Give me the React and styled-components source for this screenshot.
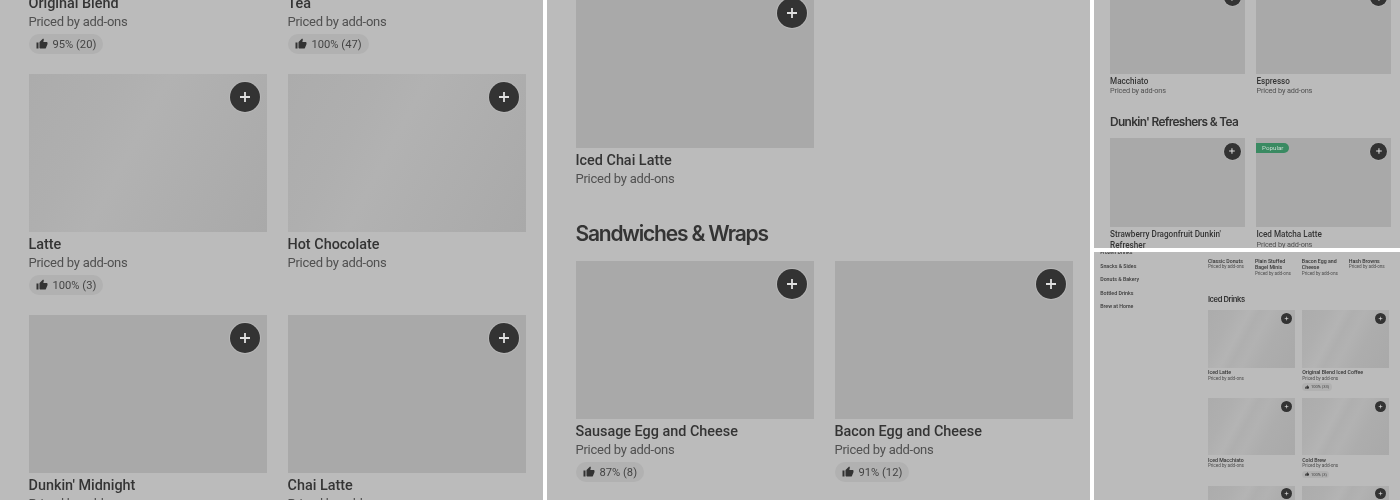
import React from "react";
import styled, { createGlobalStyle } from "styled-components";
import { MdThumbUp } from "react-icons/md";

const Global = createGlobalStyle`
  html, body { margin: 0; padding: 0; background: #fff; }
  body { font-family: Roboto, "Liberation Sans", sans-serif; }
`;

const Board = styled.div`
  width: 1400px;
  height: 500px;
  display: grid;
  grid-template-columns: 543px 543px 306px;
  grid-template-rows: 248px 248px;
  column-gap: 4px;
  row-gap: 4px;
  overflow: hidden;
  background: #fff;
`;

const Panel = styled.section`
  background: #bbbbbb;
  overflow: hidden;
  grid-row: ${(p) => p.$row || "auto"};
`;

const Sheet = styled.div`
  zoom: ${(p) => p.$zoom || 1};
  margin-top: ${(p) => p.$top || 0}px;
  padding-left: 28.5px;
  filter: blur(${(p) => p.$blur || 0.25}px);
`;

const MenuSheet = styled.div`
  zoom: 0.364;
  display: grid;
  grid-template-columns: 313px 1fr;
  filter: blur(1px);
`;

const Sidebar = styled.nav`
  display: flex;
  flex-direction: column;
  margin-top: -16px;
  padding-left: 17px;
`;

const SideItem = styled.div`
  font-size: 14.5px;
  line-height: 37px;
  font-weight: 500;
  color: #3a3a3a;
`;

const Main = styled.div`
  padding-top: 16px;
`;

const Carousel = styled.div`
  display: grid;
  grid-template-columns: repeat(4, 115px);
  column-gap: 14px;
  height: 54px;
`;

const Grid = styled.div`
  display: grid;
  grid-template-columns: 238.5px 238.5px;
  column-gap: 20.5px;
  row-gap: 20px;
`;

const Card = styled.article`
  display: flex;
  flex-direction: column;
  align-items: flex-start;
  min-width: 0;
`;

const shines = {
  soft: "linear-gradient(118deg, #acacac 0%, #afafaf 28%, #b2b2b2 44%, #afafaf 62%, #a9a9a9 100%)",
  bright: "linear-gradient(118deg, #acacac 0%, #afafaf 22%, #b4b4b4 36%, #afafaf 44%, #b2b2b2 54%, #adadad 68%, #a9a9a9 100%)",
};

const Photo = styled.div`
  position: relative;
  align-self: stretch;
  height: 158px;
  margin-bottom: 3.5px;
  background: ${(p) => shines[p.$shine] || "#a9a9a9"};
`;

const AddButton = styled.div`
  position: absolute;
  top: 8px;
  right: 7.5px;
  width: 30px;
  height: 30px;
  border-radius: 50%;
  background: #333333;
  box-shadow: 0 0 0 1px #b6b6b6;
  display: flex;
  align-items: center;
  justify-content: center;
`;

const Badge = styled.div`
  position: absolute;
  top: 8px;
  left: 0;
  height: 19px;
  padding: 0 10px 0 10px;
  display: flex;
  align-items: center;
  border-radius: 0 10px 10px 0;
  background: #3a8a62;
  color: #c9dcd2;
  font-size: 11px;
`;

const Name = styled.div`
  font-size: 14.4px;
  line-height: 18px;
  font-weight: 500;
  color: #343434;
`;

const Sub = styled.div`
  font-size: 13px;
  line-height: 18px;
  color: #505050;
  letter-spacing: -0.25px;
`;

const Pill = styled.div`
  margin-top: 3.5px;
  height: 20px;
  padding: 0 7px;
  display: inline-flex;
  align-items: center;
  gap: 5px;
  border-radius: 10px;
  background: #b1b1b1;
  color: #444444;
  font-size: 11.2px;
  svg { font-size: 12px; color: #333333; }
`;

const Heading = styled.h2`
  margin: ${(p) => (p.$gap === undefined ? 33 : p.$gap)}px 0 13px;
  font-family: Inter, "Liberation Sans", sans-serif;
  font-size: 21px;
  line-height: 28px;
  font-weight: 600;
  letter-spacing: -1.2px;
  color: #343434;
`;

const Plus = () => (
  <svg width="14" height="14" viewBox="0 0 14 14" aria-hidden="true">
    <path d="M7 2v10M2 7h10" stroke="#e0e0e0" strokeWidth="1.8" fill="none" />
  </svg>
);

const Item = ({ name, rating, shine, badge }) => (
  <Card>
    <Photo $shine={shine}>
      {badge && <Badge>{badge}</Badge>}
      <AddButton><Plus /></AddButton>
    </Photo>
    <Name>{name}</Name>
    <Sub>Priced by add-ons</Sub>
    {rating && (
      <Pill>
        <MdThumbUp />
        {rating}
      </Pill>
    )}
  </Card>
);

const Tile = ({ name }) => (
  <div>
    <Name>{name}</Name>
    <Sub>Priced by add-ons</Sub>
  </div>
);

const side = ["Frozen Drinks", "Snacks & Sides", "Donuts & Bakery", "Bottled Drinks", "Brew at Home"];

export default function App() {
  return (
    <Board>
      <Global />
      <Panel $row="1 / span 2">
        <Sheet $top={-167}>
          <Grid>
            <Item name="Original Blend" rating="95% (20)" />
            <Item name="Tea" rating="100% (47)" />
            <Item name="Latte" rating="100% (3)" shine="soft" />
            <Item name="Hot Chocolate" shine="soft" />
            <Item name="Dunkin' Midnight" />
            <Item name="Chai Latte" />
          </Grid>
        </Sheet>
      </Panel>
      <Panel $row="1 / span 2">
        <Sheet $top={-10}>
          <Grid>
            <Item name="Iced Chai Latte" />
          </Grid>
          <Heading $gap={32.5}>Sandwiches &amp; Wraps</Heading>
          <Grid>
            <Item name="Sausage Egg and Cheese" rating="87% (8)" />
            <Item name="Bacon Egg and Cheese" rating="91% (12)" />
          </Grid>
        </Sheet>
      </Panel>
      <Panel>
        <Sheet $zoom={0.565} $top={-27} $blur={0.5}>
          <Grid>
            <Item name="Macchiato" />
            <Item name="Espresso" />
          </Grid>
          <Heading>Dunkin' Refreshers &amp; Tea</Heading>
          <Grid>
            <Item name="Strawberry Dragonfruit Dunkin' Refresher" />
            <Item name="Iced Matcha Latte" badge="Popular" />
          </Grid>
        </Sheet>
      </Panel>
      <Panel>
        <MenuSheet>
          <Sidebar>
            {side.map((s) => (
              <SideItem key={s}>{s}</SideItem>
            ))}
          </Sidebar>
          <Main>
            <Carousel>
              <Tile name="Classic Donuts" />
              <Tile name="Plain Stuffed Bagel Minis" />
              <Tile name="Bacon Egg and Cheese" />
              <Tile name="Hash Browns" />
            </Carousel>
            <Heading $gap={49}>Iced Drinks</Heading>
            <Grid>
              <Item name="Iced Latte" shine="bright" />
              <Item name="Original Blend Iced Coffee" rating="100% (33)" shine="bright" />
              <Item name="Iced Macchiato" shine="bright" />
              <Item name="Cold Brew" rating="100% (3)" shine="bright" />
              <Item name="Iced Americano" shine="bright" />
              <Item name="Iced Tea" shine="bright" />
            </Grid>
          </Main>
        </MenuSheet>
      </Panel>
    </Board>
  );
}
